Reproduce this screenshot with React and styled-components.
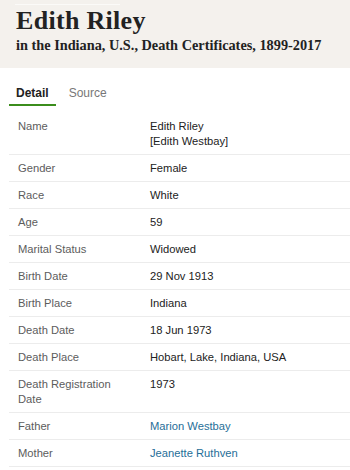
import React, { useState } from 'react'
import styled, { createGlobalStyle } from 'styled-components'

const GlobalStyle = createGlobalStyle`
  html, body {
    margin: 0;
    padding: 0;
    background: #fff;
  }
  body {
    font-family: "Liberation Sans", Arial, sans-serif;
    color: #222;
  }
`

const rows = [
  { label: 'Name', value: ['Edith Riley', '[Edith Westbay]'] },
  { label: 'Gender', value: ['Female'] },
  { label: 'Race', value: ['White'] },
  { label: 'Age', value: ['59'] },
  { label: 'Marital Status', value: ['Widowed'] },
  { label: 'Birth Date', value: ['29 Nov 1913'] },
  { label: 'Birth Place', value: ['Indiana'] },
  { label: 'Death Date', value: ['18 Jun 1973'] },
  { label: 'Death Place', value: ['Hobart, Lake, Indiana, USA'] },
  { label: 'Death Registration Date', value: ['1973'] },
  { label: 'Father', value: ['Marion Westbay'], link: true },
  { label: 'Mother', value: ['Jeanette Ruthven'], link: true },
]

function App() {
  const [tab, setTab] = useState('detail')

  return (
    <>
      <GlobalStyle />
      <Header>
        <Sheen />
        <Title>Edith Riley</Title>
        <Subtitle>in the Indiana, U.S., Death Certificates, 1899-2017</Subtitle>
      </Header>
      <Tabs>
        <Tab active={tab === 'detail'} onClick={() => setTab('detail')}>Detail</Tab>
        <Tab active={tab === 'source'} onClick={() => setTab('source')}>Source</Tab>
      </Tabs>
      <Table>
        {rows.map((row) => (
          <Row key={row.label}>
            <Label>{row.label}</Label>
            <Value>
              {row.value.map((line) =>
                row.link ? <Link key={line} href="#">{line}</Link> : <div key={line}>{line}</div>
              )}
            </Value>
          </Row>
        ))}
      </Table>
    </>
  )
}

export default App

const Header = styled.header`
  background: #f4f1ed;
  padding: 4px 16px 15px;
  height: 68px;
  box-sizing: border-box;
`

const Sheen = styled.div`
  width: 105px;
  height: 1px;
  margin-left: -1px;
  background: #fbfaf8;
`

const Title = styled.h1`
  margin: 0;
  font-family: "Liberation Serif", "Times New Roman", serif;
  font-weight: 700;
  font-size: 26px;
  line-height: 31px;
  color: #222;
  letter-spacing: 0.3px;
`

const Subtitle = styled.div`
  font-family: "Liberation Serif", "Times New Roman", serif;
  font-weight: 700;
  font-size: 14.3px;
  line-height: 18px;
  color: #222;
`

const Tabs = styled.nav`
  display: flex;
  gap: 6px;
  margin-top: 12px;
  padding-left: 9px;
`

const Tab = styled.button`
  border: 0;
  background: none;
  cursor: pointer;
  font-family: "Liberation Sans", Arial, sans-serif;
  font-size: 12px;
  line-height: 16px;
  padding: 5px 7px 3px;
  font-weight: ${(p) => (p.active ? 700 : 400)};
  color: ${(p) => (p.active ? '#222' : '#777')};
  border-bottom: 2px solid ${(p) => (p.active ? '#3b8d1c' : 'transparent')};
`

const Table = styled.div`
  margin: 7px 0 0 9px;
`

const Row = styled.div`
  display: grid;
  grid-template-columns: 132px 1fr;
  padding: 6px 0 5px 9px;
  border-bottom: 1px solid #ececec;
  font-size: 11.2px;
  line-height: 15px;
`

const Label = styled.div`
  color: #5c5c5c;
  padding-right: 20px;
`

const Value = styled.div`
  color: #222;
`

const Link = styled.a`
  display: block;
  color: #1f6e98;
  text-decoration: none;
`
